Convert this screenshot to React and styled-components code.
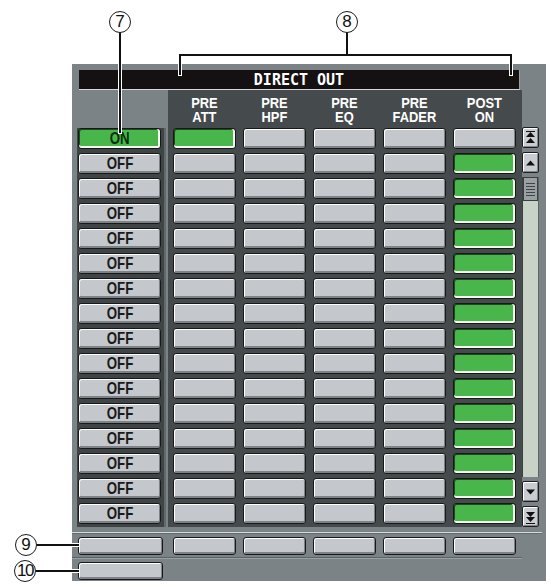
import React from "react";
import styled, { createGlobalStyle } from "styled-components";

const GlobalStyle = createGlobalStyle`
  html, body {
    margin: 0;
    padding: 0;
    background: #ffffff;
  }
`;

const Stage = styled.div`
  position: relative;
  width: 551px;
  height: 587px;
  padding: 64px 0 0 72px;
  box-sizing: border-box;
  background: #ffffff;
  overflow: hidden;
  font-family: "Liberation Sans", Arial, sans-serif;
`;

const Panel = styled.div`
  width: 474px;
  height: 517px;
  background: #7b8387;
  padding-top: 6px;
  box-sizing: border-box;
  display: flex;
  flex-direction: column;
`;

const TitleBar = styled.div`
  margin-left: 7px;
  width: 441px;
  height: 20px;
  box-sizing: border-box;
  background: #151112;
  border-bottom: 1px solid #d6d9d9;
  border-right: 1px solid #9aa0a2;
  color: #ffffff;
  display: flex;
  align-items: center;
  justify-content: center;
  font-family: "DejaVu Sans Mono", "Liberation Mono", monospace;
`;

const Squeeze = styled.span`
  display: inline-block;
  font-weight: bold;
  font-size: ${(p) => p.$size || 14}px;
  line-height: ${(p) => p.$lh || 14}px;
  letter-spacing: ${(p) => p.$spacing || 0}px;
  transform: scaleX(${(p) => p.$sx || 0.8});
  white-space: pre;
  text-align: center;
`;

const Body = styled.div`
  display: flex;
  height: 437px;
`;

const OnCol = styled.div`
  width: 96px;
  display: flex;
  flex-direction: column;
`;

const OnHead = styled.div`
  height: 38px;
  flex: none;
`;

const OnRows = styled.div`
  margin-left: 5px;
  width: 89px;
  flex: 1;
  background: #3f4446;
  padding: 0 3px 0 1px;
  box-sizing: border-box;
  display: flex;
  flex-direction: column;
  gap: 4px;
  border-right: 2px solid #62696c;
`;

const DataCol = styled.div`
  width: 354px;
  background: #454a4c;
  padding: 0 6px 0 5px;
  box-sizing: border-box;
  display: flex;
  flex-direction: column;
`;

const HeadGrid = styled.div`
  height: 38px;
  display: grid;
  grid-template-columns: repeat(5, 63px);
  column-gap: 7px;
  align-items: center;
`;

const HeadLabel = styled.div`
  color: #ffffff;
  display: flex;
  justify-content: center;
  padding-top: 1px;
`;

const RowGrid = styled.div`
  display: grid;
  grid-template-columns: repeat(5, 63px);
  grid-auto-rows: 21px;
  column-gap: 7px;
  row-gap: 4px;
`;

const Button = styled.div`
  height: ${(p) => p.$h || 21}px;
  box-sizing: border-box;
  border: 1px solid #181818;
  border-radius: 3px;
  display: flex;
  align-items: center;
  justify-content: center;
  overflow: hidden;
  color: ${(p) => (p.$on ? "#0f2f10" : "#1a1a1a")};
  background: ${(p) => (p.$on ? "#49b64c" : "#c4c7cb")};
  box-shadow: ${(p) =>
    p.$on
      ? "inset 0 -2px 0 #f2fbee, inset -2px 0 0 #f2fbee, inset 1px 1px 0 #1f4a1f"
      : "inset 1px 1px 0 #ffffff, inset 0 -2px 0 #7e8286, inset -1px 0 0 #7e8286"};
`;

const ScrollCol = styled.div`
  width: 17px;
  padding-top: 37px;
  display: flex;
  flex-direction: column;
  gap: 4px;
`;

const ScrollBtn = styled.div`
  height: 21px;
  flex: none;
  box-sizing: border-box;
  border: 1px solid #1e1e1e;
  border-radius: 2px;
  background: #c9ccd0;
  box-shadow: inset 1px 1px 0 #ffffff, inset -1px -1px 0 #83878b;
  display: flex;
  align-items: center;
  justify-content: center;
`;

const Track = styled.div`
  flex: 1;
  background: #c8d2c6;
  border-left: 1px solid #3c4143;
  border-right: 1px solid #5d6466;
  display: flex;
  flex-direction: column;
`;

const Thumb = styled.div`
  height: 24px;
  box-sizing: border-box;
  background: #9ba0a3;
  border: 1px solid #3a3e40;
  display: flex;
  flex-direction: column;
  justify-content: center;
  align-items: center;
  gap: 2px;
`;

const Grip = styled.div`
  width: 9px;
  height: 1px;
  background: #3f4446;
`;

const Sep = styled.div`
  margin-top: 5px;
  width: 470px;
  height: 1px;
  background: #d3d8d9;
  box-shadow: 0 1px 0 #656c6f;
`;

const BottomRow = styled.div`
  margin-top: ${(p) => p.$mt}px;
  display: flex;
  align-items: center;
`;

const SmallOn = styled.div`
  margin-left: 6px;
  width: 85px;
`;

const SmallGrid = styled.div`
  margin-left: 10px;
  display: grid;
  grid-template-columns: repeat(5, 63px);
  column-gap: 7px;
`;

const Line2 = styled.div`
  margin-top: 2px;
  width: 450px;
  height: 1px;
  background: #5b6265;
  box-shadow: 0 1px 0 #9aa1a4;
`;

const Overlay = styled.svg`
  position: absolute;
  left: 0;
  top: 0;
  pointer-events: none;
`;

const Callout = styled.div`
  position: absolute;
  left: ${(p) => p.$x - 11}px;
  top: ${(p) => p.$y - 11}px;
  width: 22px;
  height: 22px;
  box-sizing: border-box;
  border: 1.5px solid #1a1a1a;
  border-radius: 50%;
  background: #ffffff;
  display: flex;
  align-items: center;
  justify-content: center;
  font-size: 17px;
  color: #111;
  letter-spacing: ${(p) => (p.$wide ? -1.5 : 0)}px;
`;

const headers = [
  ["PRE", "ATT"],
  ["PRE", "HPF"],
  ["PRE", "EQ"],
  ["PRE", "FADER"],
  ["POST", "ON"],
];

const ROWS = 16;

const Arrow = ({ dir, double }) => {
  const up = dir === "up";
  const tri = (y) =>
    up ? `M3 ${y + 5} L7.5 ${y} L12 ${y + 5} Z` : `M3 ${y} L7.5 ${y + 5} L12 ${y} Z`;
  return (
    <svg width="15" height="14" viewBox="0 0 15 14">
      {double ? (
        <>
          <path d={tri(up ? 1 : 2)} fill="#111" />
          <path d={tri(7)} fill="#111" />
          <rect x="3" y={up ? 0 : 13} width="9" height="1" fill="#111" />
        </>
      ) : (
        <path d={tri(4.5)} fill="#111" />
      )}
    </svg>
  );
};

export default function App() {
  const rows = Array.from({ length: ROWS }, (_, i) => i);
  return (
    <Stage>
      <GlobalStyle />
      <Panel>
        <TitleBar>
          <Squeeze $size={15} $lh={18} $sx={1}>DIRECT OUT</Squeeze>
        </TitleBar>
        <Body>
          <OnCol>
            <OnHead />
            <OnRows>
              {rows.map((i) => (
                <Button key={i} $on={i === 0}>
                  <Squeeze $size={17} $lh={19} $sx={0.78}>{i === 0 ? "ON" : "OFF"}</Squeeze>
                </Button>
              ))}
            </OnRows>
          </OnCol>
          <DataCol>
            <HeadGrid>
              {headers.map(([a, b]) => (
                <HeadLabel key={a + b}>
                  <Squeeze $size={15} $lh={14} $sx={0.86}>{a + "\n" + b}</Squeeze>
                </HeadLabel>
              ))}
            </HeadGrid>
            <RowGrid>
              {rows.map((i) =>
                headers.map((h, c) => (
                  <Button
                    key={i + "-" + c}
                    $on={(i === 0 && c === 0) || (i > 0 && c === 4)}
                  />
                ))
              )}
            </RowGrid>
          </DataCol>
          <ScrollCol>
            <ScrollBtn>
              <Arrow dir="up" double />
            </ScrollBtn>
            <ScrollBtn>
              <Arrow dir="up" />
            </ScrollBtn>
            <Track>
              <Thumb>
                <Grip />
                <Grip />
                <Grip />
                <Grip />
                <Grip />
              </Thumb>
            </Track>
            <ScrollBtn>
              <Arrow dir="down" />
            </ScrollBtn>
            <ScrollBtn>
              <Arrow dir="down" double />
            </ScrollBtn>
          </ScrollCol>
        </Body>
        <Sep />
        <BottomRow $mt={4}>
          <SmallOn>
            <Button $h={18} />
          </SmallOn>
          <SmallGrid>
            {headers.map((h) => (
              <Button key={h.join()} $h={18} />
            ))}
          </SmallGrid>
        </BottomRow>
        <Line2 />
        <BottomRow $mt={4}>
          <SmallOn>
            <Button $h={18} />
          </SmallOn>
        </BottomRow>
      </Panel>

      <Overlay width="551" height="587" viewBox="0 0 551 587">
        <g fill="none" strokeLinecap="square">
          <g stroke="#ffffff" strokeWidth="4">
            <path d="M120 33 V132" />
            <path d="M180 74 V55 H511 V74 M347 33 V55" />
            <path d="M37 545 H78" />
            <path d="M37 571 H78" />
          </g>
          <g stroke="#111111" strokeWidth="2">
            <path d="M120 33 V132" />
            <path d="M180 74 V55 H511 V74 M347 33 V55" />
            <path d="M37 545 H78" />
            <path d="M37 571 H78" />
          </g>
        </g>
      </Overlay>
      <Callout $x={120} $y={22}>7</Callout>
      <Callout $x={347} $y={22}>8</Callout>
      <Callout $x={26} $y={545}>9</Callout>
      <Callout $x={25} $y={571} $wide>10</Callout>
    </Stage>
  );
}
